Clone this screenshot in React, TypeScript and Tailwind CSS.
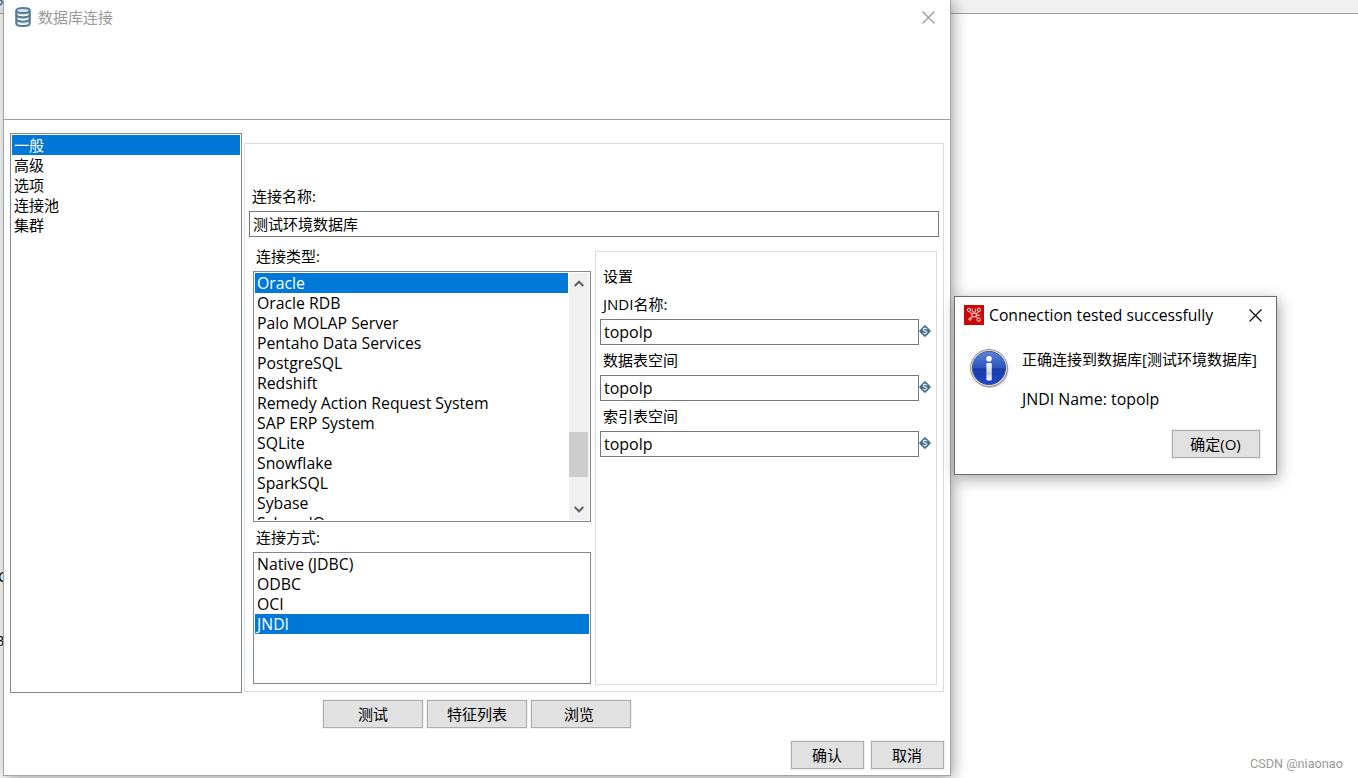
import type { ReactNode } from "react";
import clsx from "clsx";

const sections = ["一般", "高级", "选项", "连接池", "集群"];

const databaseTypes = [
  "Oracle",
  "Oracle RDB",
  "Palo MOLAP Server",
  "Pentaho Data Services",
  "PostgreSQL",
  "Redshift",
  "Remedy Action Request System",
  "SAP ERP System",
  "SQLite",
  "Snowflake",
  "SparkSQL",
  "Sybase",
  "SybaseIQ"
];

const accessModes = ["Native (JDBC)", "ODBC", "OCI", "JNDI"];

const settings = [
  { label: "JNDI名称:", value: "topolp" },
  { label: "数据表空间", value: "topolp" },
  { label: "索引表空间", value: "topolp" }
];

function DatabaseIcon() {
  return (
    <svg className="h-5 w-4" viewBox="0 0 16 20" fill="none" stroke="#557a96" strokeWidth="1.9">
      <path d="M1.2 3.6v12.8c0 1.5 3 2.6 6.8 2.6s6.8-1.1 6.8-2.6V3.6" fill="#c3d0da" />
      <ellipse cx="8" cy="3.5" rx="6.8" ry="2.5" fill="#dde5eb" />
      <path d="M1.2 7.8c0 1.4 3 2.4 6.8 2.4s6.8-1 6.8-2.4M1.2 12.1c0 1.4 3 2.4 6.8 2.4s6.8-1 6.8-2.4" />
      <path d="M3.4 7.6c2.4 1 6.8 1 9.2 0M3.4 11.9c2.4 1 6.8 1 9.2 0M3.4 16.3c2.4 1 6.8 1 9.2 0" stroke="#fff" strokeWidth="1.2" />
    </svg>
  );
}

function CloseIcon({ className }: { className: string }) {
  return (
    <svg className={className} viewBox="0 0 13 13" fill="none" stroke="currentColor" strokeWidth="1.1">
      <path d="M.5.5l12 12M12.5.5l-12 12" />
    </svg>
  );
}

function VariableIcon() {
  return (
    <svg className="-mt-0.5 h-3 w-3 shrink-0" viewBox="0 0 12 12">
      <path d="M5.2.6q.8-.8 1.6 0l4.6 4.6q.8.8 0 1.6l-4.6 4.6q-.8.8-1.6 0L.6 6.8q-.8-.8 0-1.6z" fill="#44708f" />
      <path d="M7.9 4.2C7.2 3.1 4.2 3 4.2 4.7c0 1.5 3.6.9 3.6 2.6 0 1.7-3 1.6-3.8.5" fill="none" stroke="#e6edf2" strokeWidth="1.1" />
      <path d="M6 2.2v1.2M6 8.6v1.2" fill="none" stroke="#b9cad6" strokeWidth=".9" />
    </svg>
  );
}

function AppLogo() {
  return (
    <svg className="h-5 w-5" viewBox="0 0 20 20" fill="none" stroke="#fff" strokeWidth=".9">
      <path d="M0 0h20v20H0z" fill="#cf0404" stroke="none" />
      <circle cx="5" cy="4.9" r="1.6" />
      <circle cx="15" cy="4.9" r="1.6" />
      <circle cx="6.1" cy="14.1" r="1.2" />
      <circle cx="14.7" cy="14.6" r="1.7" />
      <path d="M8.3 3.7v2.1c0 1 .7 1.2 1.7 1.2s1.7-.2 1.7-1.2V3.7M5.3 6.7c.3 1 1.2 1.5 2.4 1.5h4.6c1.2 0 2.1-.5 2.4-1.5" />
      <path d="M8 8.4v3.4h4.2V8.4M7.9 11.5l-1.2 1.4M12.2 11.6l1.3 1.4M12.3 10.2h3.9" />
    </svg>
  );
}

function InfoIcon() {
  return (
    <svg className="h-10 w-10" viewBox="0 0 40 40">
      <defs>
        <linearGradient id="ball" x1="0" y1="0" x2="0" y2="1">
          <stop offset="0" stopColor="#5f83d6" />
          <stop offset=".5" stopColor="#2c55bd" />
          <stop offset=".52" stopColor="#1a3da9" />
          <stop offset="1" stopColor="#2144c8" />
        </linearGradient>
        <linearGradient id="stem" x1="0" y1="0" x2="0" y2="1">
          <stop offset="0" stopColor="#fff" />
          <stop offset=".6" stopColor="#c9cdd8" />
          <stop offset="1" stopColor="#fff" />
        </linearGradient>
      </defs>
      <circle cx="20" cy="20.5" r="18.5" fill="#000" opacity=".22" />
      <circle cx="19" cy="19" r="18.4" fill="#e9e9e9" stroke="#8b8b8b" strokeWidth="1" />
      <circle cx="19" cy="19" r="16.6" fill="url(#ball)" stroke="#27408e" strokeWidth=".8" />
      <circle cx="19" cy="9.8" r="2.8" fill="#fff" />
      <rect x="16.4" y="14" width="5.4" height="17.4" rx="1.2" fill="url(#stem)" />
    </svg>
  );
}

function ListItem({ children, selected }: { children: ReactNode; selected?: boolean }) {
  return (
    <li className={clsx("h-5 pl-0.5 whitespace-nowrap", selected && "bg-[#0078d7] text-white")}>
      {children}
    </li>
  );
}

function TextField({ value, className }: { value: string; className: string }) {
  return (
    <div className={clsx("h-[26px] border border-[#7a7a7a] bg-white pt-0.5 pl-[3px]", className)}>{value}</div>
  );
}

function PushButton({ children, className }: { children: ReactNode; className: string }) {
  return (
    <button
      type="button"
      className={clsx(
        "h-7 border border-[#adadad] bg-[#e1e1e1] text-center leading-[27px] shadow-[0_0_0_1px_#f0f0f0]",
        className
      )}
    >
      {children}
    </button>
  );
}

function Scrollbar() {
  return (
    <div className="flex w-5 flex-col items-center bg-[#f0f0f0] pr-px text-[#606060]">
      <svg className="mt-[7px] h-[7px] w-[10px]" viewBox="0 0 10 7" fill="none" stroke="currentColor" strokeWidth="2">
        <path d="M.7 6L5 1.7 9.3 6" />
      </svg>
      <div className="mt-[145px] h-[45px] w-[19px] bg-[#cdcdcd]" />
      <svg className="mt-[29px] h-[7px] w-[10px]" viewBox="0 0 10 7" fill="none" stroke="currentColor" strokeWidth="2">
        <path d="M.7 1L5 5.3 9.3 1" />
      </svg>
    </div>
  );
}

function ConnectionWindow() {
  return (
    <section className="absolute top-0 left-[3px] h-[776px] w-[948px] border border-t-0 border-[#a3a3a3] bg-white shadow-[2px_3px_14px_rgba(0,0,0,0.38)]">
      <header className="flex h-[120px] items-start border-b border-[#a0a0a0] pt-[7px] pr-[15px] pl-[11px] text-[#999]">
        <DatabaseIcon />
        <h1 className="ml-[7px]">数据库连接</h1>
        <CloseIcon className="mt-1 ml-auto h-[13px] w-[13px]" />
      </header>

      <div className="flex gap-0.5 pt-[13px] pl-1.5">
        <ul className="h-[560px] w-[232px] border border-[#828790] p-px">
          {sections.map((name, i) => (
            <ListItem key={name} selected={i === 0}>
              {name}
            </ListItem>
          ))}
        </ul>

        <div className="mt-2.5 h-[549px] w-[700px] border border-[#dcdcdc] pt-[42px] pl-1">
          <p className="pl-[3px]">连接名称:</p>
          <TextField className="mt-[5px] w-[690px]" value="测试环境数据库" />

          <div className="flex gap-1 pl-1">
            <div className="w-[338px] pt-[9px]">
              <p className="pl-[3px]">连接类型:</p>
              <div className="mt-[5px] flex h-[251px] gap-px border border-[#828790] p-px">
                <ul className="flex-1 overflow-hidden text-[15.8px] leading-[21px]">
                  {databaseTypes.map((name, i) => (
                    <ListItem key={name} selected={i === 0}>
                      {name}
                    </ListItem>
                  ))}
                </ul>
                <Scrollbar />
              </div>
              <p className="mt-[5px] pl-[3px]">连接方式:</p>
              <ul className="mt-[5px] h-[132px] border border-[#828790] p-px text-[15.8px] leading-[21px]">
                {accessModes.map((name) => (
                  <ListItem key={name} selected={name === "JNDI"}>
                    {name}
                  </ListItem>
                ))}
              </ul>
            </div>

            <div className="mt-[14px] h-[434px] w-[342px] border border-[#dcdcdc] pt-[14px] pl-1">
              <p className="mb-2 pl-[3px]">设置</p>
              {settings.map((field) => (
                <div key={field.label} className="mb-[5px]">
                  <p className="pl-[3px]">{field.label}</p>
                  <div className="mt-[5px] flex items-center">
                    <TextField className="w-[319px] text-base leading-[21px]" value={field.value} />
                    <VariableIcon />
                  </div>
                </div>
              ))}
            </div>
          </div>
        </div>
      </div>

      <div className="mt-[7px] flex gap-1 pl-[319px]">
        <PushButton className="w-[100px]">测试</PushButton>
        <PushButton className="w-[100px]">特征列表</PushButton>
        <PushButton className="w-[100px] pr-1">浏览</PushButton>
      </div>

      <footer className="mt-[13px] flex justify-end gap-[7px] pr-1.5">
        <PushButton className="w-[73px] pr-px">确认</PushButton>
        <PushButton className="w-[73px] pr-px">取消</PushButton>
      </footer>
    </section>
  );
}

function ResultDialog() {
  return (
    <section className="absolute top-[296px] left-[954px] h-[179px] w-[323px] border border-[#6b6b6b] bg-white shadow-[2px_4px_14px_rgba(0,0,0,0.35)]">
      <header className="flex h-7 items-start pt-2 pr-[14px] pl-[9px]">
        <AppLogo />
        <h2 className="ml-[5px] text-[15.7px] leading-[21px]">Connection tested successfully</h2>
        <CloseIcon className="mt-1 ml-auto h-[13px] w-[13px]" />
      </header>
      <div className="flex pt-6 pl-[15px]">
        <InfoIcon />
        <div className="ml-3 h-[60px] whitespace-nowrap">
          <p>正确连接到数据库[测试环境数据库]</p>
          <p className="mt-5 text-[15.9px] leading-[21px]">JNDI Name: topolp</p>
        </div>
      </div>
      <div className="mt-[21px] flex justify-end pr-4">
        <PushButton className="w-[88px] pr-px">确定(O)</PushButton>
      </div>
    </section>
  );
}

export default function App() {
  return (
    <main className="relative h-[778px] w-[1358px] overflow-hidden bg-white font-['Open_Sans','Noto_Sans_CJK_SC',sans-serif] text-[15px] leading-5 text-black">
      <div className="h-[14px] border-b border-[#a0a0a0] bg-[#f0f0f0]" />
      <svg className="absolute top-0 left-0 h-2 w-[3px]" viewBox="0 0 3 8" fill="none" stroke="#3d6c91" strokeWidth="1.5">
        <path d="M0 0c2.5.5 3 3.5 0 5" />
      </svg>
      <span className="absolute top-[566px] -left-[2px]">C</span>
      <span className="absolute top-[630px] -left-1">3</span>
      <ConnectionWindow />
      <ResultDialog />
      <p className="absolute right-[15px] bottom-1 font-['Roboto','Liberation_Sans',sans-serif] text-[12.7px] text-[#999]">
        CSDN @niaonao
      </p>
    </main>
  );
}
